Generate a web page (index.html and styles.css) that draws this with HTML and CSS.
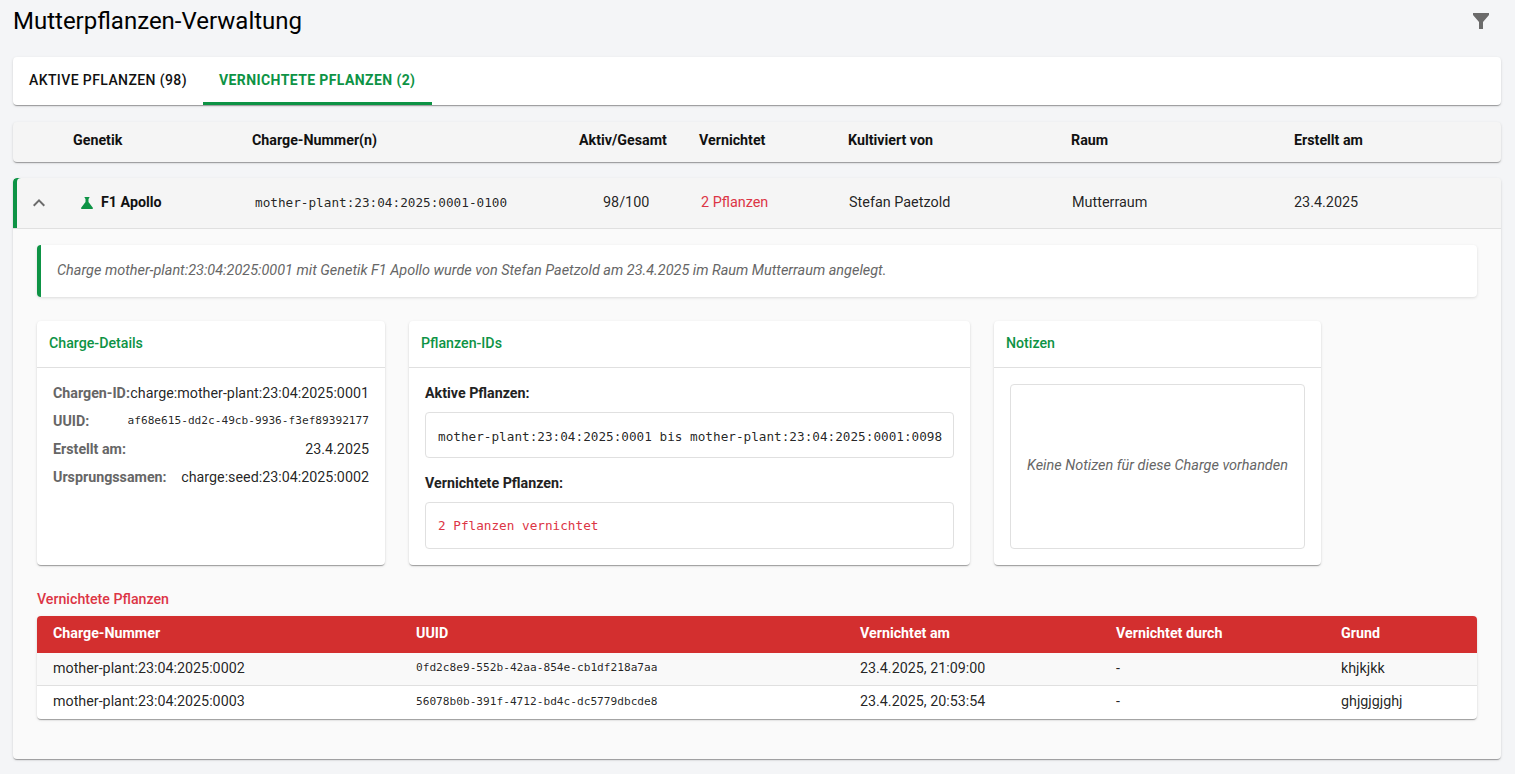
FILE: index.html
```html
<!DOCTYPE html>
<html lang="de">
<head>
    <meta charset="UTF-8">
    <meta name="viewport" content="width=device-width, initial-scale=1.0">
    <title>Mutterpflanzen-Verwaltung</title>
    <link rel="stylesheet" href="styles.css">
</head>
<body>
    <div class="page">
        <header class="page-head">
            <h1>Mutterpflanzen-Verwaltung</h1>
            <svg class="filter-icon" viewBox="0 0 24 24" width="24" height="24"><path d="M4 4h16v2l-6 7v7h-4v-7L4 6z"/></svg>
        </header>

        <nav class="tabs">
            <div class="tab">Aktive Pflanzen (98)</div>
            <div class="tab active">Vernichtete Pflanzen (2)</div>
        </nav>

        <div class="list-head cols">
            <span></span>
            <span>Genetik</span>
            <span>Charge-Nummer(n)</span>
            <span>Aktiv/Gesamt</span>
            <span>Vernichtet</span>
            <span>Kultiviert von</span>
            <span>Raum</span>
            <span>Erstellt am</span>
        </div>

        <section class="batch">
            <div class="batch-row cols">
                <svg class="chevron" viewBox="0 0 24 24" width="24" height="24"><path d="M12 8l-6 6 1.41 1.41L12 10.83l4.59 4.58L18 14z"/></svg>
                <span class="genetic">
                    <svg class="flask" viewBox="0 0 24 24" width="18" height="18"><path d="M19.8 18.4 14 10.67V6.5l1.35-1.69c.26-.33.03-.81-.39-.81H9.04c-.42 0-.65.48-.39.81L10 6.5v4.17L4.2 18.4c-.49.66-.02 1.6.8 1.6h14c.82 0 1.29-.94.8-1.6z"/></svg>
                    F1 Apollo
                </span>
                <span class="mono batch-no">mother-plant:23:04:2025:0001-0100</span>
                <span class="count">98/100</span>
                <span class="destroyed">2 Pflanzen</span>
                <span>Stefan Paetzold</span>
                <span>Mutterraum</span>
                <span class="created">23.4.2025</span>
            </div>

            <div class="batch-detail">
                <p class="summary">Charge mother-plant:23:04:2025:0001 mit Genetik F1 Apollo wurde von Stefan Paetzold am 23.4.2025 im Raum Mutterraum angelegt.</p>

                <div class="cards">
                    <div class="card card-details">
                        <h3>Charge-Details</h3>
                        <div class="card-body">
                            <div class="info"><b>Chargen-ID:</b><span>charge:mother-plant:23:04:2025:0001</span></div>
                            <div class="info"><b>UUID:</b><span class="mono small">af68e615-dd2c-49cb-9936-f3ef89392177</span></div>
                            <div class="info"><b>Erstellt am:</b><span>23.4.2025</span></div>
                            <div class="info"><b>Ursprungssamen:</b><span>charge:seed:23:04:2025:0002</span></div>
                        </div>
                    </div>

                    <div class="card card-ids">
                        <h3>Pflanzen-IDs</h3>
                        <div class="card-body">
                            <div class="id-label">Aktive Pflanzen:</div>
                            <div class="id-box mono">mother-plant:23:04:2025:0001 bis mother-plant:23:04:2025:0001:0098</div>
                            <div class="id-label">Vernichtete Pflanzen:</div>
                            <div class="id-box mono red">2 Pflanzen vernichtet</div>
                        </div>
                    </div>

                    <div class="card card-notes">
                        <h3>Notizen</h3>
                        <div class="card-body">
                            <div class="notes-box">Keine Notizen für diese Charge vorhanden</div>
                        </div>
                    </div>
                </div>

                <h4 class="destroyed-title">Vernichtete Pflanzen</h4>
                <table class="destroyed-table">
                    <thead>
                        <tr>
                            <th class="c1">Charge-Nummer</th>
                            <th class="c2">UUID</th>
                            <th class="c3">Vernichtet am</th>
                            <th class="c4">Vernichtet durch</th>
                            <th>Grund</th>
                        </tr>
                    </thead>
                    <tbody>
                        <tr>
                            <td>mother-plant:23:04:2025:0002</td>
                            <td class="mono small">0fd2c8e9-552b-42aa-854e-cb1df218a7aa</td>
                            <td>23.4.2025, 21:09:00</td>
                            <td>-</td>
                            <td>khjkjkk</td>
                        </tr>
                        <tr>
                            <td>mother-plant:23:04:2025:0003</td>
                            <td class="mono small">56078b0b-391f-4712-bd4c-dc5779dbcde8</td>
                            <td>23.4.2025, 20:53:54</td>
                            <td>-</td>
                            <td>ghjgjgjghj</td>
                        </tr>
                    </tbody>
                </table>
            </div>
        </section>
    </div>
</body>
</html>
```

FILE: styles.css
```css
* {
    box-sizing: border-box;
}
body {
    margin: 0;
    background: #f4f5f7;
    color: rgba(0, 0, 0, 0.87);
    font-family: Roboto, "Liberation Sans", sans-serif;
    font-size: 14.4px;
    line-height: 1.43;
}
.page {
    padding: 0 14px 15px 13px;
}
.page-head {
    display: flex;
    justify-content: space-between;
    align-items: center;
    height: 42px;
    margin-bottom: 15px;
}
.page-head h1 {
    margin: 0;
    font-size: 24px;
    font-weight: 400;
    line-height: 42px;
    color: #000;
}
.filter-icon {
    fill: #6b6b6b;
    margin-right: 8px;
}
.tabs {
    display: flex;
    height: 48px;
    margin-bottom: 17px;
    background: #fff;
    border-radius: 4px;
    box-shadow: 0 2px 1px -1px rgba(0, 0, 0, 0.2), 0 1px 1px rgba(0, 0, 0, 0.14), 0 1px 3px rgba(0, 0, 0, 0.12);
}
.tab {
    padding: 0 16px;
    font-size: 14px;
    font-weight: 500;
    line-height: 46px;
    letter-spacing: 0.4px;
    text-transform: uppercase;
    color: #111;
}
.tab.active {
    padding-right: 16.5px;
    font-weight: 700;
    color: #0d9345;
    border-bottom: 3px solid #0d9345;
}
.cols {
    display: grid;
    grid-template-columns: 60px 179px 327px 120px 149px 223px 223px 1fr;
    align-items: center;
}
.list-head {
    height: 40px;
    margin-bottom: 16px;
    padding-bottom: 4px;
    background: #f5f5f5;
    border-radius: 4px;
    font-size: 14.25px;
    font-weight: 700;
    color: #111;
    box-shadow: 0 2px 1px -1px rgba(0, 0, 0, 0.2), 0 1px 1px rgba(0, 0, 0, 0.14), 0 1px 3px rgba(0, 0, 0, 0.12);
}
.batch {
    background: #fafafa;
    border-radius: 4px;
    box-shadow: 0 2px 1px -1px rgba(0, 0, 0, 0.2), 0 1px 1px rgba(0, 0, 0, 0.14), 0 1px 3px rgba(0, 0, 0, 0.12);
}
.batch-row {
    height: 51px;
    background: #f5f5f5;
    border-bottom: 1px solid #e0e0e0;
    box-shadow: inset 4px 0 0 #0d9345;
    border-top-left-radius: 4px;
    border-top-right-radius: 4px;
}
.batch-row > span {
    padding-left: 1px;
}
.chevron {
    fill: #6b6b6b;
    margin-left: 14px;
    margin-bottom: 1px;
}
.genetic {
    display: flex;
    align-items: center;
    gap: 5px;
    margin-left: 4px;
    padding-bottom: 1px;
    font-size: 14.25px;
    font-weight: 700;
    color: #111;
}
.flask {
    fill: #0d9345;
}
.mono {
    font-family: "DejaVu Sans Mono", monospace;
    font-size: 12.7px;
}
.batch-row .mono {
    padding-left: 0;
}
.small {
    font-size: 11.15px;
}
.batch-no {
    margin-left: 3px;
}
.count {
    margin-left: 23px;
}
.destroyed {
    margin-left: 1px;
    color: #dc3545;
}
.created {
    margin-left: -1px;
}
.batch-detail {
    padding: 16px 24px 40px;
}
.summary {
    margin: 0 0 24px;
    height: 52px;
    padding: 0 16px;
    font-size: 14.44px;
    line-height: 51px;
    font-style: italic;
    color: #666;
    background: #fff;
    border-left: 4px solid #0d9345;
    border-radius: 4px;
    box-shadow: 0 1px 3px rgba(0, 0, 0, 0.12);
}
.cards {
    display: flex;
    gap: 24px;
    align-items: stretch;
    margin-bottom: 24px;
}
.card {
    height: 244px;
    background: #fff;
    border-radius: 4px;
    box-shadow: 0 2px 1px -1px rgba(0, 0, 0, 0.2), 0 1px 1px rgba(0, 0, 0, 0.14), 0 1px 3px rgba(0, 0, 0, 0.12);
}
.card h3 {
    margin: 0;
    height: 47px;
    padding: 0 12px;
    font-size: 14.2px;
    font-weight: 500;
    line-height: 44px;
    color: #0d9345;
    border-bottom: 1px solid #e0e0e0;
}
.card-body {
    padding: 16px;
}
.card-details {
    width: 348px;
}
.card-details .card-body,
.card-ids .card-body {
    padding-top: 15px;
}
.card-ids {
    width: 561px;
}
.card-notes {
    width: 327px;
}
.info {
    display: flex;
    justify-content: space-between;
    align-items: center;
    height: 20px;
    margin-bottom: 8px;
    font-size: 14.3px;
}
.info b {
    font-size: 14.25px;
    font-weight: 700;
    color: #666;
}
.info .small {
    font-size: 11.15px;
}
.id-label {
    height: 20px;
    margin-bottom: 9px;
    font-size: 14.25px;
    line-height: 20px;
    font-weight: 700;
    color: #222;
}
.id-box {
    height: 46px;
    margin-bottom: 15px;
    padding: 0 12px;
    line-height: 47px;
    white-space: nowrap;
    border: 1px solid #e0e0e0;
    border-radius: 4px;
}
.id-box:last-child {
    height: 47px;
    margin-bottom: 0;
    line-height: 45px;
}
.red {
    color: #dc3545;
}
.notes-box {
    display: flex;
    justify-content: center;
    align-items: center;
    height: 165px;
    padding-bottom: 1px;
    font-size: 14.44px;
    font-style: italic;
    color: #666;
    border: 1px solid #e0e0e0;
    border-radius: 4px;
}
.destroyed-title {
    margin: 24px 0 6px;
    font-size: 14.2px;
    font-weight: 500;
    line-height: 21px;
    color: #dc3545;
}
.destroyed-table {
    width: 100%;
    table-layout: fixed;
    border-collapse: separate;
    border-spacing: 0;
    background: #fff;
    border-radius: 4px;
    box-shadow: 0 2px 1px -1px rgba(0, 0, 0, 0.2), 0 1px 1px rgba(0, 0, 0, 0.14), 0 1px 3px rgba(0, 0, 0, 0.12);
}
.destroyed-table th {
    height: 37px;
    padding: 0 16px 2px;
    text-align: left;
    font-size: 14.25px;
    font-weight: 700;
    color: #fff;
    background: #d32f2f;
}
.destroyed-table th:first-child {
    border-top-left-radius: 4px;
}
.destroyed-table th:last-child {
    border-top-right-radius: 4px;
}
.c1 {
    width: 363px;
}
.c2 {
    width: 444px;
}
.c3 {
    width: 256px;
}
.c4 {
    width: 225px;
}
.destroyed-table td {
    height: 33px;
    padding: 0 16px 2px;
    font-size: 14.3px;
    border-bottom: 1px solid #e0e0e0;
}
.destroyed-table td.small {
    font-size: 11.15px;
}
.destroyed-table tbody tr:first-child td {
    background: #f9f9f9;
}
.destroyed-table tbody tr:last-child td {
    border-bottom: 0;
}
```
